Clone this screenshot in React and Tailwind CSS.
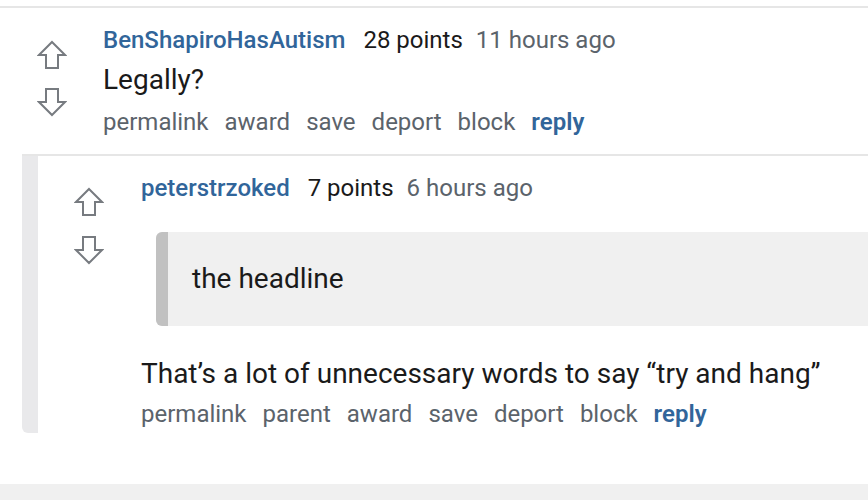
const ArrowUp = () => (
  <svg width="30" height="30" viewBox="0 0 30 30" fill="none">
    <path d="M15 2 L28 15 L21 15 L21 28 L9 28 L9 15 L2 15 Z" stroke="#777b80" strokeWidth="2" strokeLinejoin="miter" />
  </svg>
);

const ArrowDown = () => (
  <svg width="30" height="30" viewBox="0 0 30 30" fill="none">
    <path d="M15 28 L28 15 L21 15 L21 2 L9 2 L9 15 L2 15 Z" stroke="#777b80" strokeWidth="2" strokeLinejoin="miter" />
  </svg>
);

const Votes = ({ gap }) => (
  <div className="flex flex-col items-center w-[30px] shrink-0" style={{ rowGap: gap }}>
    <ArrowUp />
    <ArrowDown />
  </div>
);

const Actions = ({ items }) => (
  <div className="flex items-center gap-[16px] h-[38px] text-[24px] text-[#5b636b] whitespace-nowrap">
    {items.map((item) => (
      <span key={item}>{item}</span>
    ))}
    <span className="font-semibold text-[#31659a]">reply</span>
  </div>
);

const Header = ({ user, points, time }) => (
  <div className="flex items-center h-[40px] text-[24px] whitespace-nowrap">
    <span className="font-medium text-[#31659a] mr-[18px]">{user}</span>
    <span className="text-[#1a1a1a] mr-[13px]">{points}</span>
    <span className="text-[#5b636b]">{time}</span>
  </div>
);

export default function App() {
  return (
    <div className="w-[868px] h-[500px] bg-white overflow-hidden flex flex-col font-['Roboto',sans-serif]">
      <div className="mt-[6px] border-t-2 border-[#e6e6e6]">
        {/* top level comment */}
        <div className="flex pl-[37px]">
          <div className="pt-[32px]">
            <Votes gap="17px" />
          </div>
          <div className="ml-[36px] pt-[12px]">
            <Header user="BenShapiroHasAutism" points="28 points" time="11 hours ago" />
            <div className="h-[40px] flex items-center text-[28px] text-[#1a1a1a]">Legally?</div>
            <div className="mt-[3px]">
              <Actions items={['permalink', 'award', 'save', 'deport', 'block']} />
            </div>
          </div>
        </div>

        {/* nested reply */}
        <div className="ml-[22px] mt-[13px] border-t-2 border-[#e6e6e6] flex">
          <div className="w-[16px] bg-[#e9e9eb] rounded-bl-[6px] shrink-0" />
          <div className="flex flex-1 pl-[36px]">
            <div className="pt-[31px]">
              <Votes gap="18px" />
            </div>
            <div className="ml-[37px] flex-1 pt-[12px]">
              <Header user="peterstrzoked" points="7 points" time="6 hours ago" />
              <div className="mt-[24px] ml-[15px] h-[94px] flex bg-[#f0f0f0] rounded-l-[6px] overflow-hidden">
                <div className="w-[12px] bg-[#c1c1c1]" />
                <div className="pl-[24px] flex items-center text-[28px] text-[#1a1a1a]">the headline</div>
              </div>
              <div className="mt-[28px] h-[40px] flex items-center text-[28px] text-[#1a1a1a] whitespace-nowrap">
                That’s a lot of unnecessary words to say “try and hang”
              </div>
              <div className="mt-[1px]">
                <Actions items={['permalink', 'parent', 'award', 'save', 'deport', 'block']} />
              </div>
            </div>
          </div>
        </div>
      </div>
      <div className="flex-1" />
      <div className="h-[16px] bg-[#f0f0f0]" />
    </div>
  );
}
